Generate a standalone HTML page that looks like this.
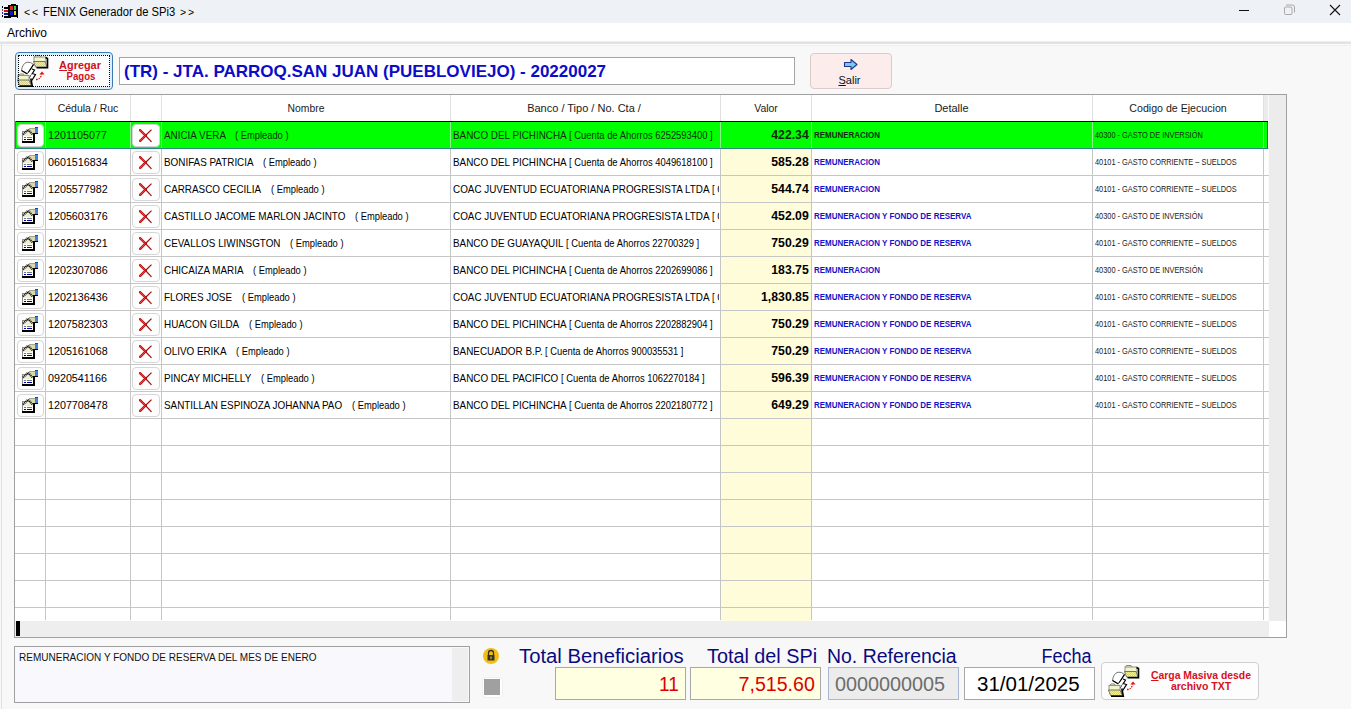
<!DOCTYPE html>
<html><head><meta charset="utf-8">
<style>
*{margin:0;padding:0;box-sizing:border-box}
html,body{width:1351px;height:709px;overflow:hidden;background:#f7f7f7;font-family:"Liberation Sans",sans-serif;position:relative}
.r{position:absolute}
.t{position:absolute;white-space:nowrap}
</style></head><body>
<div class="r" style="left:0px;top:0px;width:1351px;height:23px;background:#eef2f7"></div>
<div class="r" style="left:0px;top:23px;width:1351px;height:18px;background:#ffffff"></div>
<div class="r" style="left:0px;top:41px;width:1351px;height:1px;background:#efefef"></div>
<div class="r" style="left:0px;top:42px;width:1351px;height:2px;background:#e2e2e2"></div>
<div class="r" style="left:0px;top:44px;width:1351px;height:1px;background:#fbfbfb"></div>
<div class="r" style="left:0px;top:45px;width:1351px;height:1px;background:#efefef"></div>
<div class="r" style="left:0px;top:46px;width:1351px;height:663px;background:#f8f8f8"></div>
<div class="r" style="left:1px;top:44px;width:1px;height:665px;background:#e0e0e0"></div>
<svg class="r" style="left:0px;top:0px" width="20" height="20" viewBox="0 0 20 20" shape-rendering="crispEdges">
<rect x="2" y="6" width="1" height="2" fill="#000"/><rect x="2" y="9" width="1" height="2" fill="#8a4040"/><rect x="2" y="12" width="1" height="2" fill="#2030a0"/><rect x="2" y="15" width="1" height="2" fill="#000"/>
<rect x="4" y="7" width="5" height="2" fill="#000"/><rect x="4" y="10" width="5" height="2" fill="#d01010"/><rect x="4" y="13" width="5" height="2" fill="#1010a0"/><rect x="4" y="16" width="5" height="2" fill="#000"/>
<path d="M8 5H11V4H16V5H18V18H17V17H11V18H8Z" fill="#000"/>
<rect x="10" y="6" width="3" height="4" fill="#e02828"/><rect x="14" y="6" width="2" height="4" fill="#30d838"/>
<rect x="10" y="11" width="3" height="4" fill="#1018c8"/><rect x="14" y="11" width="2" height="4" fill="#f0e020"/>
</svg>
<div class="t" style="left:23.5px;top:5.50px;font-size:11px;line-height:13px;color:#000;font-weight:400;transform:scaleX(0.95);transform-origin:left center;">&lt;</div>
<div class="t" style="left:31.8px;top:5.50px;font-size:11px;line-height:13px;color:#000;font-weight:400;transform:scaleX(0.95);transform-origin:left center;">&lt;</div>
<div class="t" style="left:43px;top:5.00px;font-size:12px;line-height:14px;color:#000;font-weight:400;transform:scaleX(0.935);transform-origin:left center;">FENIX Generador de SPi3</div>
<div class="t" style="left:179.5px;top:5.50px;font-size:11px;line-height:13px;color:#000;font-weight:400;transform:scaleX(0.95);transform-origin:left center;">&gt;</div>
<div class="t" style="left:187.5px;top:5.50px;font-size:11px;line-height:13px;color:#000;font-weight:400;transform:scaleX(0.95);transform-origin:left center;">&gt;</div>
<div class="r" style="left:1239px;top:10px;width:10px;height:1px;background:#111"></div>
<svg class="r" style="left:1283px;top:4px" width="13" height="13" viewBox="0 0 13 13"><rect x="1.5" y="3" width="7.5" height="7.5" rx="1" fill="none" stroke="#a8a8a8" stroke-width="1"/><path d="M3 1H9.5Q11.5 1 11.5 3V8.5" fill="none" stroke="#a8a8a8" stroke-width="1"/></svg>
<svg class="r" style="left:1329px;top:4px" width="12" height="12" viewBox="0 0 12 12"><path d="M1 1L11 11M11 1L1 11" stroke="#111" stroke-width="1.1"/></svg>
<div class="t" style="left:7px;top:25.50px;font-size:12px;line-height:14px;color:#000;font-weight:400;">Archivo</div>
<div class="r" style="left:15px;top:52px;width:98px;height:38px;border:1px solid #3d7ab5;border-radius:4px;background:#fdfcfc;box-shadow:inset 0 0 0 2px #d8f0fb"></div>
<svg class="r" style="left:14px;top:52px" width="38" height="38" viewBox="0 0 38 38">
<defs><pattern id="dz1" width="2" height="2" patternUnits="userSpaceOnUse"><rect width="2" height="2" fill="#f4f488"/><rect width="1" height="1" fill="#d0d08a"/><rect x="1" y="1" width="1" height="1" fill="#d0d08a"/></pattern></defs>
<path d="M20.5 5L21.5 3.5H26L27 5" fill="#f4f4d0" stroke="#777" stroke-width="0.9"/>
<rect x="20" y="5" width="12" height="5" fill="#f4f4cc" stroke="#888" stroke-width="0.9"/>
<path d="M19.5 9.5H31L33 15H21.5Z" fill="url(#dz1)" stroke="#666" stroke-width="0.9"/>
<path d="M31.5 5.5L33.5 6.5V15.8H22.5" fill="none" stroke="#000" stroke-width="1.6"/>
<path d="M7.5 18.5C8 14 10 11 13 10.2L16.5 10.5L19.5 12.5L14 21L13.5 22Z" fill="#fff" stroke="#666" stroke-width="0.9"/>
<path d="M19.5 12.5L14 21M7.5 18.5L13.5 22" fill="none" stroke="#000" stroke-width="1.3"/>
<path d="M13.5 22L18 17L20.5 18L15.5 26Z" fill="#fff"/>
<path d="M18 17L20.5 18L15.5 26M9 24L15.5 26.5" fill="none" stroke="#000" stroke-width="1.2"/>
<path d="M15.5 26.5L18 21.5L21.5 22.5L16.5 30Z" fill="#fff"/>
<path d="M18 21.5L21.5 22.5L16.5 30.5" fill="none" stroke="#000" stroke-width="1.2"/>
<path d="M4.5 23.5L6 22H9.5L10.5 23.5" fill="#f4f4d0" stroke="#777" stroke-width="0.9"/>
<rect x="4" y="23.5" width="11" height="5" fill="#f4f4cc" stroke="#888" stroke-width="0.9"/>
<path d="M3.5 28H15L17.3 33.5H5.5Z" fill="url(#dz1)" stroke="#666" stroke-width="0.9"/>
<path d="M16.8 26.5L18.3 34.3H6" fill="none" stroke="#000" stroke-width="1.6"/>
<path d="M22 27.5Q26.5 27.5 27.6 22.5" fill="none" stroke="#e01818" stroke-width="1.3" stroke-dasharray="1.6 0.9"/>
<path d="M28 19.5L30.6 22.6H25.4Z" fill="#e01818"/>
</svg>
<div class="r" style="left:18px;top:55px;width:92px;height:32px;border:1px dotted #000"></div>
<div class="t" style="left:80px;top:59.50px;font-size:10px;line-height:12px;color:#d0101c;font-weight:700;transform:translateX(-50%) scaleX(1.09);"><u>A</u>gregar</div>
<div class="t" style="left:80.5px;top:71.00px;font-size:10px;line-height:12px;color:#d0101c;font-weight:700;transform:translateX(-50%) scaleX(0.96);">Pagos</div>
<div class="r" style="left:119px;top:57px;width:676px;height:28px;border:1px solid #a4a4a4;background:#fff"></div>
<div class="t" style="left:124px;top:61.50px;font-size:17px;line-height:20px;color:#0c0cc8;font-weight:700;">(TR) - JTA. PARROQ.SAN JUAN (PUEBLOVIEJO) - 20220027</div>
<div class="r" style="left:810px;top:53px;width:82px;height:36px;border:1px solid #dccbcb;border-radius:4px;background:#fcecec"></div>
<svg class="r" style="left:843px;top:58px" width="16" height="13" viewBox="0 0 16 13"><path d="M1.5 4.5h6.5v-3l6 5l-6 5v-3h-6.5z" fill="#7fc4f4" stroke="#1a3a8a" stroke-width="1.1" stroke-linejoin="round"/></svg>
<div class="t" style="left:849.5px;top:73.50px;font-size:11px;line-height:13px;color:#111;font-weight:400;transform:translateX(-50%);"><u>S</u>alir</div>
<div class="r" style="left:14px;top:94px;width:1273px;height:544px;border:1px solid #a0a0a0;background:#fff"></div>
<div class="r" style="left:721px;top:122px;width:90px;height:499px;background:#fffcda"></div>
<div class="r" style="left:1269px;top:95px;width:17px;height:526px;background:#ececec"></div>
<div class="r" style="left:1264px;top:95px;width:4px;height:26px;background:#ebebeb"></div>
<div class="r" style="left:1268px;top:95px;width:1px;height:526px;background:#fbfbfb"></div>
<div class="r" style="left:15px;top:621px;width:1254px;height:16px;background:#eeeeee"></div>
<div class="r" style="left:1269px;top:621px;width:17px;height:16px;background:#fff"></div>
<div class="r" style="left:16px;top:621px;width:4px;height:15px;background:#000"></div>
<div class="r" style="left:45px;top:95px;width:1px;height:26px;background:#e0e0e0"></div>
<div class="r" style="left:130px;top:95px;width:1px;height:26px;background:#e0e0e0"></div>
<div class="r" style="left:161px;top:95px;width:1px;height:26px;background:#e0e0e0"></div>
<div class="r" style="left:450px;top:95px;width:1px;height:26px;background:#e0e0e0"></div>
<div class="r" style="left:720px;top:95px;width:1px;height:26px;background:#e0e0e0"></div>
<div class="r" style="left:811px;top:95px;width:1px;height:26px;background:#e0e0e0"></div>
<div class="r" style="left:1092px;top:95px;width:1px;height:26px;background:#e0e0e0"></div>
<div class="r" style="left:1263px;top:95px;width:1px;height:26px;background:#e0e0e0"></div>
<div class="r" style="left:15px;top:148px;width:1254px;height:1px;background:#c6c6c6"></div>
<div class="r" style="left:15px;top:175px;width:1254px;height:1px;background:#c6c6c6"></div>
<div class="r" style="left:15px;top:202px;width:1254px;height:1px;background:#c6c6c6"></div>
<div class="r" style="left:15px;top:229px;width:1254px;height:1px;background:#c6c6c6"></div>
<div class="r" style="left:15px;top:256px;width:1254px;height:1px;background:#c6c6c6"></div>
<div class="r" style="left:15px;top:283px;width:1254px;height:1px;background:#c6c6c6"></div>
<div class="r" style="left:15px;top:310px;width:1254px;height:1px;background:#c6c6c6"></div>
<div class="r" style="left:15px;top:337px;width:1254px;height:1px;background:#c6c6c6"></div>
<div class="r" style="left:15px;top:364px;width:1254px;height:1px;background:#c6c6c6"></div>
<div class="r" style="left:15px;top:391px;width:1254px;height:1px;background:#c6c6c6"></div>
<div class="r" style="left:15px;top:418px;width:1254px;height:1px;background:#c6c6c6"></div>
<div class="r" style="left:15px;top:445px;width:1254px;height:1px;background:#c6c6c6"></div>
<div class="r" style="left:15px;top:472px;width:1254px;height:1px;background:#c6c6c6"></div>
<div class="r" style="left:15px;top:499px;width:1254px;height:1px;background:#c6c6c6"></div>
<div class="r" style="left:15px;top:526px;width:1254px;height:1px;background:#c6c6c6"></div>
<div class="r" style="left:15px;top:553px;width:1254px;height:1px;background:#c6c6c6"></div>
<div class="r" style="left:15px;top:580px;width:1254px;height:1px;background:#c6c6c6"></div>
<div class="r" style="left:15px;top:607px;width:1254px;height:1px;background:#c6c6c6"></div>
<div class="r" style="left:45px;top:122px;width:1px;height:498px;background:#c6c6c6"></div>
<div class="r" style="left:130px;top:122px;width:1px;height:498px;background:#c6c6c6"></div>
<div class="r" style="left:161px;top:122px;width:1px;height:498px;background:#c6c6c6"></div>
<div class="r" style="left:450px;top:122px;width:1px;height:498px;background:#c6c6c6"></div>
<div class="r" style="left:720px;top:122px;width:1px;height:498px;background:#c6c6c6"></div>
<div class="r" style="left:811px;top:122px;width:1px;height:498px;background:#c6c6c6"></div>
<div class="r" style="left:1092px;top:122px;width:1px;height:498px;background:#c6c6c6"></div>
<div class="r" style="left:1263px;top:122px;width:1px;height:498px;background:#c6c6c6"></div>
<div class="r" style="left:15px;top:121px;width:1253px;height:28px;background:#00ff00"></div>
<div class="r" style="left:1267px;top:122px;width:1px;height:26px;background:#107030"></div>
<div class="r" style="left:15px;top:121px;width:1253px;height:1px;background:#000"></div>
<div class="r" style="left:15px;top:148px;width:1253px;height:1px;background:#2a8a7a"></div>
<div class="r" style="left:15px;top:121px;width:1px;height:28px;background:#3a70b0"></div>
<div class="r" style="left:45px;top:122px;width:1px;height:26px;background:#8cf08c"></div>
<div class="r" style="left:130px;top:122px;width:1px;height:26px;background:#8cf08c"></div>
<div class="r" style="left:161px;top:122px;width:1px;height:26px;background:#8cf08c"></div>
<div class="r" style="left:450px;top:122px;width:1px;height:26px;background:#8cf08c"></div>
<div class="r" style="left:720px;top:122px;width:1px;height:26px;background:#8cf08c"></div>
<div class="r" style="left:811px;top:122px;width:1px;height:26px;background:#8cf08c"></div>
<div class="r" style="left:1092px;top:122px;width:1px;height:26px;background:#8cf08c"></div>
<div class="r" style="left:1263px;top:122px;width:1px;height:26px;background:#8cf08c"></div>
<div class="t" style="left:88px;top:101.50px;font-size:11px;line-height:13px;color:#1a1a1a;font-weight:400;transform:translateX(-50%) scaleX(0.955);">Cédula / Ruc</div>
<div class="t" style="left:306px;top:101.50px;font-size:11px;line-height:13px;color:#1a1a1a;font-weight:400;transform:translateX(-50%) scaleX(0.94);">Nombre</div>
<div class="t" style="left:584px;top:101.50px;font-size:11px;line-height:13px;color:#1a1a1a;font-weight:400;transform:translateX(-50%);">Banco / Tipo / No. Cta /</div>
<div class="t" style="left:765.5px;top:101.50px;font-size:11px;line-height:13px;color:#1a1a1a;font-weight:400;transform:translateX(-50%) scaleX(0.95);">Valor</div>
<div class="t" style="left:951.5px;top:101.50px;font-size:11px;line-height:13px;color:#1a1a1a;font-weight:400;transform:translateX(-50%);">Detalle</div>
<div class="t" style="left:1177.5px;top:101.50px;font-size:11px;line-height:13px;color:#1a1a1a;font-weight:400;transform:translateX(-50%) scaleX(0.965);">Codigo de Ejecucion</div>
<div class="r" style="left:17px;top:124px;width:27px;height:23px;border:1px solid #d6d6d6;border-radius:4px;background:#fdfdfd"></div>
<svg class="r" style="left:21px;top:127px" width="18" height="16" viewBox="0 0 18 16" shape-rendering="crispEdges">
<rect x="1" y="4" width="11" height="10" fill="#fdfdf8"/>
<rect x="2" y="5" width="10" height="4" fill="#f0eed0"/>
<rect x="1" y="4" width="11" height="1" fill="#8c8c8c"/><rect x="1" y="4" width="1" height="11" fill="#8c8c8c"/>
<rect x="12" y="6" width="2" height="10" fill="#000"/><rect x="1" y="14" width="13" height="2" fill="#000"/>
<rect x="3" y="10" width="2" height="1" fill="#7070b0"/><rect x="6" y="10" width="5" height="1" fill="#6a7a90"/>
<rect x="3" y="12" width="2" height="1" fill="#0000a0"/><rect x="6" y="12" width="5" height="1" fill="#0000a0"/>
<rect x="8" y="1" width="6" height="5" fill="#dcd8a8"/><rect x="8" y="1" width="6" height="1" fill="#a8a488"/>
<rect x="12" y="6" width="5" height="1" fill="#000"/>
<rect x="14" y="1" width="3" height="5" fill="#3a84dc"/><rect x="14" y="0" width="3" height="1" fill="#1a4a90"/>
<path d="M2 7.5L7 2.5L11.5 7.5" fill="none" stroke="#111" stroke-width="2" stroke-dasharray="1.1 0.7" shape-rendering="auto"/>
</svg>
<div class="r" style="left:132px;top:124px;width:28px;height:23px;border:1px solid #d6d6d6;border-radius:4px;background:#fdfdfd"></div>
<svg class="r" style="left:139px;top:129px" width="14" height="14" viewBox="0 0 14 14">
<path d="M1 1.2L6.5 6.5" stroke="#c01010" stroke-width="2.4" stroke-linecap="round"/>
<path d="M1 1.2L6.5 6.5" stroke="#f05050" stroke-width="0.8" stroke-linecap="round"/>
<path d="M6.5 6.5L12.5 12.8" stroke="#a01010" stroke-width="1.2"/>
<path d="M1.2 11.8L6.5 6.5" stroke="#c01010" stroke-width="2.4" stroke-linecap="round"/>
<path d="M1.2 11.8L6.5 6.5" stroke="#f05050" stroke-width="0.8" stroke-linecap="round"/>
<path d="M6.5 6.5L12.5 0.6" stroke="#a01010" stroke-width="1.2"/>
</svg>
<div class="t" style="left:48px;top:129.00px;font-size:11px;line-height:13px;color:#0e2e0e;font-weight:400;transform:scaleX(0.975);transform-origin:left center;">1201105077</div>
<div class="t" style="left:163.5px;top:129.00px;font-size:10.5px;line-height:13px;color:#0e2e0e;font-weight:400;transform:scaleX(0.94);transform-origin:left center;">ANICIA VERA</div>
<div class="t" style="left:235.4959375px;top:129.00px;font-size:10.5px;line-height:13px;color:#0e2e0e;font-weight:400;transform:scaleX(0.89);transform-origin:left center;">( Empleado )</div>
<!--EMP 0 139.5-->
<div class="t" style="left:452.5px;top:129.00px;font-size:10.5px;line-height:13px;color:#0e2e0e;font-weight:400;transform:scaleX(0.94);transform-origin:left center;">BANCO DEL PICHINCHA</div>
<div class="r" style="left:569.2106249999999px;top:122px;width:149.78937500000006px;height:26px;overflow:hidden">
<div class="t" style="left:0px;top:7.00px;font-size:10.5px;line-height:13px;color:#0e2e0e;font-weight:400;transform:scaleX(0.895);transform-origin:left center;">[ Cuenta de Ahorros 6252593400 ]</div>
</div>
<div class="t" style="right:542.5px;top:128.00px;font-size:12px;line-height:14px;color:#0e2e0e;font-weight:700;transform:scaleX(1.02);transform-origin:right center;">422.34</div>
<div class="t" style="left:814px;top:129.50px;font-size:9px;line-height:11px;color:#0e2e0e;font-weight:700;transform:scaleX(0.885);transform-origin:left center;">REMUNERACION</div>
<div class="t" style="left:1095px;top:129.50px;font-size:9px;line-height:11px;color:#0e2e0e;font-weight:400;transform:scaleX(0.82);transform-origin:left center;">40300 - GASTO DE INVERSIÓN</div>
<div class="r" style="left:17px;top:151px;width:27px;height:23px;border:1px solid #d6d6d6;border-radius:4px;background:#fdfdfd"></div>
<svg class="r" style="left:21px;top:154px" width="18" height="16" viewBox="0 0 18 16" shape-rendering="crispEdges">
<rect x="1" y="4" width="11" height="10" fill="#fdfdf8"/>
<rect x="2" y="5" width="10" height="4" fill="#f0eed0"/>
<rect x="1" y="4" width="11" height="1" fill="#8c8c8c"/><rect x="1" y="4" width="1" height="11" fill="#8c8c8c"/>
<rect x="12" y="6" width="2" height="10" fill="#000"/><rect x="1" y="14" width="13" height="2" fill="#000"/>
<rect x="3" y="10" width="2" height="1" fill="#7070b0"/><rect x="6" y="10" width="5" height="1" fill="#6a7a90"/>
<rect x="3" y="12" width="2" height="1" fill="#0000a0"/><rect x="6" y="12" width="5" height="1" fill="#0000a0"/>
<rect x="8" y="1" width="6" height="5" fill="#dcd8a8"/><rect x="8" y="1" width="6" height="1" fill="#a8a488"/>
<rect x="12" y="6" width="5" height="1" fill="#000"/>
<rect x="14" y="1" width="3" height="5" fill="#3a84dc"/><rect x="14" y="0" width="3" height="1" fill="#1a4a90"/>
<path d="M2 7.5L7 2.5L11.5 7.5" fill="none" stroke="#111" stroke-width="2" stroke-dasharray="1.1 0.7" shape-rendering="auto"/>
</svg>
<div class="r" style="left:132px;top:151px;width:28px;height:23px;border:1px solid #d6d6d6;border-radius:4px;background:#fdfdfd"></div>
<svg class="r" style="left:139px;top:156px" width="14" height="14" viewBox="0 0 14 14">
<path d="M1 1.2L6.5 6.5" stroke="#c01010" stroke-width="2.4" stroke-linecap="round"/>
<path d="M1 1.2L6.5 6.5" stroke="#f05050" stroke-width="0.8" stroke-linecap="round"/>
<path d="M6.5 6.5L12.5 12.8" stroke="#a01010" stroke-width="1.2"/>
<path d="M1.2 11.8L6.5 6.5" stroke="#c01010" stroke-width="2.4" stroke-linecap="round"/>
<path d="M1.2 11.8L6.5 6.5" stroke="#f05050" stroke-width="0.8" stroke-linecap="round"/>
<path d="M6.5 6.5L12.5 0.6" stroke="#a01010" stroke-width="1.2"/>
</svg>
<div class="t" style="left:48px;top:156.00px;font-size:11px;line-height:13px;color:#000;font-weight:400;transform:scaleX(0.975);transform-origin:left center;">0601516834</div>
<div class="t" style="left:163.5px;top:156.00px;font-size:10.5px;line-height:13px;color:#000;font-weight:400;transform:scaleX(0.94);transform-origin:left center;">BONIFAS PATRICIA</div>
<div class="t" style="left:263.07906249999996px;top:156.00px;font-size:10.5px;line-height:13px;color:#000;font-weight:400;transform:scaleX(0.89);transform-origin:left center;">( Empleado )</div>
<!--EMP 1 166.5-->
<div class="t" style="left:452.5px;top:156.00px;font-size:10.5px;line-height:13px;color:#000;font-weight:400;transform:scaleX(0.94);transform-origin:left center;">BANCO DEL PICHINCHA</div>
<div class="r" style="left:569.2106249999999px;top:149px;width:149.78937500000006px;height:26px;overflow:hidden">
<div class="t" style="left:0px;top:7.00px;font-size:10.5px;line-height:13px;color:#000;font-weight:400;transform:scaleX(0.895);transform-origin:left center;">[ Cuenta de Ahorros 4049618100 ]</div>
</div>
<div class="t" style="right:542.5px;top:155.00px;font-size:12px;line-height:14px;color:#000;font-weight:700;transform:scaleX(1.02);transform-origin:right center;">585.28</div>
<div class="t" style="left:814px;top:156.50px;font-size:9px;line-height:11px;color:#1212c8;font-weight:700;transform:scaleX(0.885);transform-origin:left center;">REMUNERACION</div>
<div class="t" style="left:1095px;top:156.50px;font-size:9px;line-height:11px;color:#222;font-weight:400;transform:scaleX(0.82);transform-origin:left center;">40101 - GASTO CORRIENTE – SUELDOS</div>
<div class="r" style="left:17px;top:178px;width:27px;height:23px;border:1px solid #d6d6d6;border-radius:4px;background:#fdfdfd"></div>
<svg class="r" style="left:21px;top:181px" width="18" height="16" viewBox="0 0 18 16" shape-rendering="crispEdges">
<rect x="1" y="4" width="11" height="10" fill="#fdfdf8"/>
<rect x="2" y="5" width="10" height="4" fill="#f0eed0"/>
<rect x="1" y="4" width="11" height="1" fill="#8c8c8c"/><rect x="1" y="4" width="1" height="11" fill="#8c8c8c"/>
<rect x="12" y="6" width="2" height="10" fill="#000"/><rect x="1" y="14" width="13" height="2" fill="#000"/>
<rect x="3" y="10" width="2" height="1" fill="#7070b0"/><rect x="6" y="10" width="5" height="1" fill="#6a7a90"/>
<rect x="3" y="12" width="2" height="1" fill="#0000a0"/><rect x="6" y="12" width="5" height="1" fill="#0000a0"/>
<rect x="8" y="1" width="6" height="5" fill="#dcd8a8"/><rect x="8" y="1" width="6" height="1" fill="#a8a488"/>
<rect x="12" y="6" width="5" height="1" fill="#000"/>
<rect x="14" y="1" width="3" height="5" fill="#3a84dc"/><rect x="14" y="0" width="3" height="1" fill="#1a4a90"/>
<path d="M2 7.5L7 2.5L11.5 7.5" fill="none" stroke="#111" stroke-width="2" stroke-dasharray="1.1 0.7" shape-rendering="auto"/>
</svg>
<div class="r" style="left:132px;top:178px;width:28px;height:23px;border:1px solid #d6d6d6;border-radius:4px;background:#fdfdfd"></div>
<svg class="r" style="left:139px;top:183px" width="14" height="14" viewBox="0 0 14 14">
<path d="M1 1.2L6.5 6.5" stroke="#c01010" stroke-width="2.4" stroke-linecap="round"/>
<path d="M1 1.2L6.5 6.5" stroke="#f05050" stroke-width="0.8" stroke-linecap="round"/>
<path d="M6.5 6.5L12.5 12.8" stroke="#a01010" stroke-width="1.2"/>
<path d="M1.2 11.8L6.5 6.5" stroke="#c01010" stroke-width="2.4" stroke-linecap="round"/>
<path d="M1.2 11.8L6.5 6.5" stroke="#f05050" stroke-width="0.8" stroke-linecap="round"/>
<path d="M6.5 6.5L12.5 0.6" stroke="#a01010" stroke-width="1.2"/>
</svg>
<div class="t" style="left:48px;top:183.00px;font-size:11px;line-height:13px;color:#000;font-weight:400;transform:scaleX(0.975);transform-origin:left center;">1205577982</div>
<div class="t" style="left:163.5px;top:183.00px;font-size:10.5px;line-height:13px;color:#000;font-weight:400;transform:scaleX(0.94);transform-origin:left center;">CARRASCO CECILIA</div>
<div class="t" style="left:270.584375px;top:183.00px;font-size:10.5px;line-height:13px;color:#000;font-weight:400;transform:scaleX(0.89);transform-origin:left center;">( Empleado )</div>
<!--EMP 2 193.5-->
<div class="t" style="left:452.5px;top:183.00px;font-size:10.5px;line-height:13px;color:#000;font-weight:400;transform:scaleX(0.94);transform-origin:left center;">COAC JUVENTUD ECUATORIANA PROGRESISTA LTDA</div>
<div class="r" style="left:711.9878125px;top:176px;width:7.012187499999982px;height:26px;overflow:hidden">
<div class="t" style="left:0px;top:7.00px;font-size:10.5px;line-height:13px;color:#000;font-weight:400;transform:scaleX(0.895);transform-origin:left center;">[ Cuenta</div>
</div>
<div class="t" style="right:542.5px;top:182.00px;font-size:12px;line-height:14px;color:#000;font-weight:700;transform:scaleX(1.02);transform-origin:right center;">544.74</div>
<div class="t" style="left:814px;top:183.50px;font-size:9px;line-height:11px;color:#1212c8;font-weight:700;transform:scaleX(0.885);transform-origin:left center;">REMUNERACION</div>
<div class="t" style="left:1095px;top:183.50px;font-size:9px;line-height:11px;color:#222;font-weight:400;transform:scaleX(0.82);transform-origin:left center;">40101 - GASTO CORRIENTE – SUELDOS</div>
<div class="r" style="left:17px;top:205px;width:27px;height:23px;border:1px solid #d6d6d6;border-radius:4px;background:#fdfdfd"></div>
<svg class="r" style="left:21px;top:208px" width="18" height="16" viewBox="0 0 18 16" shape-rendering="crispEdges">
<rect x="1" y="4" width="11" height="10" fill="#fdfdf8"/>
<rect x="2" y="5" width="10" height="4" fill="#f0eed0"/>
<rect x="1" y="4" width="11" height="1" fill="#8c8c8c"/><rect x="1" y="4" width="1" height="11" fill="#8c8c8c"/>
<rect x="12" y="6" width="2" height="10" fill="#000"/><rect x="1" y="14" width="13" height="2" fill="#000"/>
<rect x="3" y="10" width="2" height="1" fill="#7070b0"/><rect x="6" y="10" width="5" height="1" fill="#6a7a90"/>
<rect x="3" y="12" width="2" height="1" fill="#0000a0"/><rect x="6" y="12" width="5" height="1" fill="#0000a0"/>
<rect x="8" y="1" width="6" height="5" fill="#dcd8a8"/><rect x="8" y="1" width="6" height="1" fill="#a8a488"/>
<rect x="12" y="6" width="5" height="1" fill="#000"/>
<rect x="14" y="1" width="3" height="5" fill="#3a84dc"/><rect x="14" y="0" width="3" height="1" fill="#1a4a90"/>
<path d="M2 7.5L7 2.5L11.5 7.5" fill="none" stroke="#111" stroke-width="2" stroke-dasharray="1.1 0.7" shape-rendering="auto"/>
</svg>
<div class="r" style="left:132px;top:205px;width:28px;height:23px;border:1px solid #d6d6d6;border-radius:4px;background:#fdfdfd"></div>
<svg class="r" style="left:139px;top:210px" width="14" height="14" viewBox="0 0 14 14">
<path d="M1 1.2L6.5 6.5" stroke="#c01010" stroke-width="2.4" stroke-linecap="round"/>
<path d="M1 1.2L6.5 6.5" stroke="#f05050" stroke-width="0.8" stroke-linecap="round"/>
<path d="M6.5 6.5L12.5 12.8" stroke="#a01010" stroke-width="1.2"/>
<path d="M1.2 11.8L6.5 6.5" stroke="#c01010" stroke-width="2.4" stroke-linecap="round"/>
<path d="M1.2 11.8L6.5 6.5" stroke="#f05050" stroke-width="0.8" stroke-linecap="round"/>
<path d="M6.5 6.5L12.5 0.6" stroke="#a01010" stroke-width="1.2"/>
</svg>
<div class="t" style="left:48px;top:210.00px;font-size:11px;line-height:13px;color:#000;font-weight:400;transform:scaleX(0.975);transform-origin:left center;">1205603176</div>
<div class="t" style="left:163.5px;top:210.00px;font-size:10.5px;line-height:13px;color:#000;font-weight:400;transform:scaleX(0.94);transform-origin:left center;">CASTILLO JACOME MARLON JACINTO</div>
<div class="t" style="left:354.86125px;top:210.00px;font-size:10.5px;line-height:13px;color:#000;font-weight:400;transform:scaleX(0.89);transform-origin:left center;">( Empleado )</div>
<!--EMP 3 220.5-->
<div class="t" style="left:452.5px;top:210.00px;font-size:10.5px;line-height:13px;color:#000;font-weight:400;transform:scaleX(0.94);transform-origin:left center;">COAC JUVENTUD ECUATORIANA PROGRESISTA LTDA</div>
<div class="r" style="left:711.9878125px;top:203px;width:7.012187499999982px;height:26px;overflow:hidden">
<div class="t" style="left:0px;top:7.00px;font-size:10.5px;line-height:13px;color:#000;font-weight:400;transform:scaleX(0.895);transform-origin:left center;">[ Cuenta</div>
</div>
<div class="t" style="right:542.5px;top:209.00px;font-size:12px;line-height:14px;color:#000;font-weight:700;transform:scaleX(1.02);transform-origin:right center;">452.09</div>
<div class="t" style="left:814px;top:210.50px;font-size:9px;line-height:11px;color:#1212c8;font-weight:700;transform:scaleX(0.885);transform-origin:left center;">REMUNERACION Y FONDO DE RESERVA</div>
<div class="t" style="left:1095px;top:210.50px;font-size:9px;line-height:11px;color:#222;font-weight:400;transform:scaleX(0.82);transform-origin:left center;">40300 - GASTO DE INVERSIÓN</div>
<div class="r" style="left:17px;top:232px;width:27px;height:23px;border:1px solid #d6d6d6;border-radius:4px;background:#fdfdfd"></div>
<svg class="r" style="left:21px;top:235px" width="18" height="16" viewBox="0 0 18 16" shape-rendering="crispEdges">
<rect x="1" y="4" width="11" height="10" fill="#fdfdf8"/>
<rect x="2" y="5" width="10" height="4" fill="#f0eed0"/>
<rect x="1" y="4" width="11" height="1" fill="#8c8c8c"/><rect x="1" y="4" width="1" height="11" fill="#8c8c8c"/>
<rect x="12" y="6" width="2" height="10" fill="#000"/><rect x="1" y="14" width="13" height="2" fill="#000"/>
<rect x="3" y="10" width="2" height="1" fill="#7070b0"/><rect x="6" y="10" width="5" height="1" fill="#6a7a90"/>
<rect x="3" y="12" width="2" height="1" fill="#0000a0"/><rect x="6" y="12" width="5" height="1" fill="#0000a0"/>
<rect x="8" y="1" width="6" height="5" fill="#dcd8a8"/><rect x="8" y="1" width="6" height="1" fill="#a8a488"/>
<rect x="12" y="6" width="5" height="1" fill="#000"/>
<rect x="14" y="1" width="3" height="5" fill="#3a84dc"/><rect x="14" y="0" width="3" height="1" fill="#1a4a90"/>
<path d="M2 7.5L7 2.5L11.5 7.5" fill="none" stroke="#111" stroke-width="2" stroke-dasharray="1.1 0.7" shape-rendering="auto"/>
</svg>
<div class="r" style="left:132px;top:232px;width:28px;height:23px;border:1px solid #d6d6d6;border-radius:4px;background:#fdfdfd"></div>
<svg class="r" style="left:139px;top:237px" width="14" height="14" viewBox="0 0 14 14">
<path d="M1 1.2L6.5 6.5" stroke="#c01010" stroke-width="2.4" stroke-linecap="round"/>
<path d="M1 1.2L6.5 6.5" stroke="#f05050" stroke-width="0.8" stroke-linecap="round"/>
<path d="M6.5 6.5L12.5 12.8" stroke="#a01010" stroke-width="1.2"/>
<path d="M1.2 11.8L6.5 6.5" stroke="#c01010" stroke-width="2.4" stroke-linecap="round"/>
<path d="M1.2 11.8L6.5 6.5" stroke="#f05050" stroke-width="0.8" stroke-linecap="round"/>
<path d="M6.5 6.5L12.5 0.6" stroke="#a01010" stroke-width="1.2"/>
</svg>
<div class="t" style="left:48px;top:237.00px;font-size:11px;line-height:13px;color:#000;font-weight:400;transform:scaleX(0.975);transform-origin:left center;">1202139521</div>
<div class="t" style="left:163.5px;top:237.00px;font-size:10.5px;line-height:13px;color:#000;font-weight:400;transform:scaleX(0.94);transform-origin:left center;">CEVALLOS LIWINSGTON</div>
<div class="t" style="left:289.971875px;top:237.00px;font-size:10.5px;line-height:13px;color:#000;font-weight:400;transform:scaleX(0.89);transform-origin:left center;">( Empleado )</div>
<!--EMP 4 247.5-->
<div class="t" style="left:452.5px;top:237.00px;font-size:10.5px;line-height:13px;color:#000;font-weight:400;transform:scaleX(0.94);transform-origin:left center;">BANCO DE GUAYAQUIL</div>
<div class="r" style="left:565.920625px;top:230px;width:153.07937500000003px;height:26px;overflow:hidden">
<div class="t" style="left:0px;top:7.00px;font-size:10.5px;line-height:13px;color:#000;font-weight:400;transform:scaleX(0.895);transform-origin:left center;">[ Cuenta de Ahorros 22700329 ]</div>
</div>
<div class="t" style="right:542.5px;top:236.00px;font-size:12px;line-height:14px;color:#000;font-weight:700;transform:scaleX(1.02);transform-origin:right center;">750.29</div>
<div class="t" style="left:814px;top:237.50px;font-size:9px;line-height:11px;color:#1212c8;font-weight:700;transform:scaleX(0.885);transform-origin:left center;">REMUNERACION Y FONDO DE RESERVA</div>
<div class="t" style="left:1095px;top:237.50px;font-size:9px;line-height:11px;color:#222;font-weight:400;transform:scaleX(0.82);transform-origin:left center;">40101 - GASTO CORRIENTE – SUELDOS</div>
<div class="r" style="left:17px;top:259px;width:27px;height:23px;border:1px solid #d6d6d6;border-radius:4px;background:#fdfdfd"></div>
<svg class="r" style="left:21px;top:262px" width="18" height="16" viewBox="0 0 18 16" shape-rendering="crispEdges">
<rect x="1" y="4" width="11" height="10" fill="#fdfdf8"/>
<rect x="2" y="5" width="10" height="4" fill="#f0eed0"/>
<rect x="1" y="4" width="11" height="1" fill="#8c8c8c"/><rect x="1" y="4" width="1" height="11" fill="#8c8c8c"/>
<rect x="12" y="6" width="2" height="10" fill="#000"/><rect x="1" y="14" width="13" height="2" fill="#000"/>
<rect x="3" y="10" width="2" height="1" fill="#7070b0"/><rect x="6" y="10" width="5" height="1" fill="#6a7a90"/>
<rect x="3" y="12" width="2" height="1" fill="#0000a0"/><rect x="6" y="12" width="5" height="1" fill="#0000a0"/>
<rect x="8" y="1" width="6" height="5" fill="#dcd8a8"/><rect x="8" y="1" width="6" height="1" fill="#a8a488"/>
<rect x="12" y="6" width="5" height="1" fill="#000"/>
<rect x="14" y="1" width="3" height="5" fill="#3a84dc"/><rect x="14" y="0" width="3" height="1" fill="#1a4a90"/>
<path d="M2 7.5L7 2.5L11.5 7.5" fill="none" stroke="#111" stroke-width="2" stroke-dasharray="1.1 0.7" shape-rendering="auto"/>
</svg>
<div class="r" style="left:132px;top:259px;width:28px;height:23px;border:1px solid #d6d6d6;border-radius:4px;background:#fdfdfd"></div>
<svg class="r" style="left:139px;top:264px" width="14" height="14" viewBox="0 0 14 14">
<path d="M1 1.2L6.5 6.5" stroke="#c01010" stroke-width="2.4" stroke-linecap="round"/>
<path d="M1 1.2L6.5 6.5" stroke="#f05050" stroke-width="0.8" stroke-linecap="round"/>
<path d="M6.5 6.5L12.5 12.8" stroke="#a01010" stroke-width="1.2"/>
<path d="M1.2 11.8L6.5 6.5" stroke="#c01010" stroke-width="2.4" stroke-linecap="round"/>
<path d="M1.2 11.8L6.5 6.5" stroke="#f05050" stroke-width="0.8" stroke-linecap="round"/>
<path d="M6.5 6.5L12.5 0.6" stroke="#a01010" stroke-width="1.2"/>
</svg>
<div class="t" style="left:48px;top:264.00px;font-size:11px;line-height:13px;color:#000;font-weight:400;transform:scaleX(0.975);transform-origin:left center;">1202307086</div>
<div class="t" style="left:163.5px;top:264.00px;font-size:10.5px;line-height:13px;color:#000;font-weight:400;transform:scaleX(0.94);transform-origin:left center;">CHICAIZA MARIA</div>
<div class="t" style="left:253.03281249999998px;top:264.00px;font-size:10.5px;line-height:13px;color:#000;font-weight:400;transform:scaleX(0.89);transform-origin:left center;">( Empleado )</div>
<!--EMP 5 274.5-->
<div class="t" style="left:452.5px;top:264.00px;font-size:10.5px;line-height:13px;color:#000;font-weight:400;transform:scaleX(0.94);transform-origin:left center;">BANCO DEL PICHINCHA</div>
<div class="r" style="left:569.2106249999999px;top:257px;width:149.78937500000006px;height:26px;overflow:hidden">
<div class="t" style="left:0px;top:7.00px;font-size:10.5px;line-height:13px;color:#000;font-weight:400;transform:scaleX(0.895);transform-origin:left center;">[ Cuenta de Ahorros 2202699086 ]</div>
</div>
<div class="t" style="right:542.5px;top:263.00px;font-size:12px;line-height:14px;color:#000;font-weight:700;transform:scaleX(1.02);transform-origin:right center;">183.75</div>
<div class="t" style="left:814px;top:264.50px;font-size:9px;line-height:11px;color:#1212c8;font-weight:700;transform:scaleX(0.885);transform-origin:left center;">REMUNERACION</div>
<div class="t" style="left:1095px;top:264.50px;font-size:9px;line-height:11px;color:#222;font-weight:400;transform:scaleX(0.82);transform-origin:left center;">40300 - GASTO DE INVERSIÓN</div>
<div class="r" style="left:17px;top:286px;width:27px;height:23px;border:1px solid #d6d6d6;border-radius:4px;background:#fdfdfd"></div>
<svg class="r" style="left:21px;top:289px" width="18" height="16" viewBox="0 0 18 16" shape-rendering="crispEdges">
<rect x="1" y="4" width="11" height="10" fill="#fdfdf8"/>
<rect x="2" y="5" width="10" height="4" fill="#f0eed0"/>
<rect x="1" y="4" width="11" height="1" fill="#8c8c8c"/><rect x="1" y="4" width="1" height="11" fill="#8c8c8c"/>
<rect x="12" y="6" width="2" height="10" fill="#000"/><rect x="1" y="14" width="13" height="2" fill="#000"/>
<rect x="3" y="10" width="2" height="1" fill="#7070b0"/><rect x="6" y="10" width="5" height="1" fill="#6a7a90"/>
<rect x="3" y="12" width="2" height="1" fill="#0000a0"/><rect x="6" y="12" width="5" height="1" fill="#0000a0"/>
<rect x="8" y="1" width="6" height="5" fill="#dcd8a8"/><rect x="8" y="1" width="6" height="1" fill="#a8a488"/>
<rect x="12" y="6" width="5" height="1" fill="#000"/>
<rect x="14" y="1" width="3" height="5" fill="#3a84dc"/><rect x="14" y="0" width="3" height="1" fill="#1a4a90"/>
<path d="M2 7.5L7 2.5L11.5 7.5" fill="none" stroke="#111" stroke-width="2" stroke-dasharray="1.1 0.7" shape-rendering="auto"/>
</svg>
<div class="r" style="left:132px;top:286px;width:28px;height:23px;border:1px solid #d6d6d6;border-radius:4px;background:#fdfdfd"></div>
<svg class="r" style="left:139px;top:291px" width="14" height="14" viewBox="0 0 14 14">
<path d="M1 1.2L6.5 6.5" stroke="#c01010" stroke-width="2.4" stroke-linecap="round"/>
<path d="M1 1.2L6.5 6.5" stroke="#f05050" stroke-width="0.8" stroke-linecap="round"/>
<path d="M6.5 6.5L12.5 12.8" stroke="#a01010" stroke-width="1.2"/>
<path d="M1.2 11.8L6.5 6.5" stroke="#c01010" stroke-width="2.4" stroke-linecap="round"/>
<path d="M1.2 11.8L6.5 6.5" stroke="#f05050" stroke-width="0.8" stroke-linecap="round"/>
<path d="M6.5 6.5L12.5 0.6" stroke="#a01010" stroke-width="1.2"/>
</svg>
<div class="t" style="left:48px;top:291.00px;font-size:11px;line-height:13px;color:#000;font-weight:400;transform:scaleX(0.975);transform-origin:left center;">1202136436</div>
<div class="t" style="left:163.5px;top:291.00px;font-size:10.5px;line-height:13px;color:#000;font-weight:400;transform:scaleX(0.94);transform-origin:left center;">FLORES JOSE</div>
<div class="t" style="left:241.5178125px;top:291.00px;font-size:10.5px;line-height:13px;color:#000;font-weight:400;transform:scaleX(0.89);transform-origin:left center;">( Empleado )</div>
<!--EMP 6 301.5-->
<div class="t" style="left:452.5px;top:291.00px;font-size:10.5px;line-height:13px;color:#000;font-weight:400;transform:scaleX(0.94);transform-origin:left center;">COAC JUVENTUD ECUATORIANA PROGRESISTA LTDA</div>
<div class="r" style="left:711.9878125px;top:284px;width:7.012187499999982px;height:26px;overflow:hidden">
<div class="t" style="left:0px;top:7.00px;font-size:10.5px;line-height:13px;color:#000;font-weight:400;transform:scaleX(0.895);transform-origin:left center;">[ Cuenta</div>
</div>
<div class="t" style="right:542.5px;top:290.00px;font-size:12px;line-height:14px;color:#000;font-weight:700;transform:scaleX(1.02);transform-origin:right center;">1,830.85</div>
<div class="t" style="left:814px;top:291.50px;font-size:9px;line-height:11px;color:#1212c8;font-weight:700;transform:scaleX(0.885);transform-origin:left center;">REMUNERACION Y FONDO DE RESERVA</div>
<div class="t" style="left:1095px;top:291.50px;font-size:9px;line-height:11px;color:#222;font-weight:400;transform:scaleX(0.82);transform-origin:left center;">40101 - GASTO CORRIENTE – SUELDOS</div>
<div class="r" style="left:17px;top:313px;width:27px;height:23px;border:1px solid #d6d6d6;border-radius:4px;background:#fdfdfd"></div>
<svg class="r" style="left:21px;top:316px" width="18" height="16" viewBox="0 0 18 16" shape-rendering="crispEdges">
<rect x="1" y="4" width="11" height="10" fill="#fdfdf8"/>
<rect x="2" y="5" width="10" height="4" fill="#f0eed0"/>
<rect x="1" y="4" width="11" height="1" fill="#8c8c8c"/><rect x="1" y="4" width="1" height="11" fill="#8c8c8c"/>
<rect x="12" y="6" width="2" height="10" fill="#000"/><rect x="1" y="14" width="13" height="2" fill="#000"/>
<rect x="3" y="10" width="2" height="1" fill="#7070b0"/><rect x="6" y="10" width="5" height="1" fill="#6a7a90"/>
<rect x="3" y="12" width="2" height="1" fill="#0000a0"/><rect x="6" y="12" width="5" height="1" fill="#0000a0"/>
<rect x="8" y="1" width="6" height="5" fill="#dcd8a8"/><rect x="8" y="1" width="6" height="1" fill="#a8a488"/>
<rect x="12" y="6" width="5" height="1" fill="#000"/>
<rect x="14" y="1" width="3" height="5" fill="#3a84dc"/><rect x="14" y="0" width="3" height="1" fill="#1a4a90"/>
<path d="M2 7.5L7 2.5L11.5 7.5" fill="none" stroke="#111" stroke-width="2" stroke-dasharray="1.1 0.7" shape-rendering="auto"/>
</svg>
<div class="r" style="left:132px;top:313px;width:28px;height:23px;border:1px solid #d6d6d6;border-radius:4px;background:#fdfdfd"></div>
<svg class="r" style="left:139px;top:318px" width="14" height="14" viewBox="0 0 14 14">
<path d="M1 1.2L6.5 6.5" stroke="#c01010" stroke-width="2.4" stroke-linecap="round"/>
<path d="M1 1.2L6.5 6.5" stroke="#f05050" stroke-width="0.8" stroke-linecap="round"/>
<path d="M6.5 6.5L12.5 12.8" stroke="#a01010" stroke-width="1.2"/>
<path d="M1.2 11.8L6.5 6.5" stroke="#c01010" stroke-width="2.4" stroke-linecap="round"/>
<path d="M1.2 11.8L6.5 6.5" stroke="#f05050" stroke-width="0.8" stroke-linecap="round"/>
<path d="M6.5 6.5L12.5 0.6" stroke="#a01010" stroke-width="1.2"/>
</svg>
<div class="t" style="left:48px;top:318.00px;font-size:11px;line-height:13px;color:#000;font-weight:400;transform:scaleX(0.975);transform-origin:left center;">1207582303</div>
<div class="t" style="left:163.5px;top:318.00px;font-size:10.5px;line-height:13px;color:#000;font-weight:400;transform:scaleX(0.94);transform-origin:left center;">HUACON GILDA</div>
<div class="t" style="left:248.64125px;top:318.00px;font-size:10.5px;line-height:13px;color:#000;font-weight:400;transform:scaleX(0.89);transform-origin:left center;">( Empleado )</div>
<!--EMP 7 328.5-->
<div class="t" style="left:452.5px;top:318.00px;font-size:10.5px;line-height:13px;color:#000;font-weight:400;transform:scaleX(0.94);transform-origin:left center;">BANCO DEL PICHINCHA</div>
<div class="r" style="left:569.2106249999999px;top:311px;width:149.78937500000006px;height:26px;overflow:hidden">
<div class="t" style="left:0px;top:7.00px;font-size:10.5px;line-height:13px;color:#000;font-weight:400;transform:scaleX(0.895);transform-origin:left center;">[ Cuenta de Ahorros 2202882904 ]</div>
</div>
<div class="t" style="right:542.5px;top:317.00px;font-size:12px;line-height:14px;color:#000;font-weight:700;transform:scaleX(1.02);transform-origin:right center;">750.29</div>
<div class="t" style="left:814px;top:318.50px;font-size:9px;line-height:11px;color:#1212c8;font-weight:700;transform:scaleX(0.885);transform-origin:left center;">REMUNERACION Y FONDO DE RESERVA</div>
<div class="t" style="left:1095px;top:318.50px;font-size:9px;line-height:11px;color:#222;font-weight:400;transform:scaleX(0.82);transform-origin:left center;">40101 - GASTO CORRIENTE – SUELDOS</div>
<div class="r" style="left:17px;top:340px;width:27px;height:23px;border:1px solid #d6d6d6;border-radius:4px;background:#fdfdfd"></div>
<svg class="r" style="left:21px;top:343px" width="18" height="16" viewBox="0 0 18 16" shape-rendering="crispEdges">
<rect x="1" y="4" width="11" height="10" fill="#fdfdf8"/>
<rect x="2" y="5" width="10" height="4" fill="#f0eed0"/>
<rect x="1" y="4" width="11" height="1" fill="#8c8c8c"/><rect x="1" y="4" width="1" height="11" fill="#8c8c8c"/>
<rect x="12" y="6" width="2" height="10" fill="#000"/><rect x="1" y="14" width="13" height="2" fill="#000"/>
<rect x="3" y="10" width="2" height="1" fill="#7070b0"/><rect x="6" y="10" width="5" height="1" fill="#6a7a90"/>
<rect x="3" y="12" width="2" height="1" fill="#0000a0"/><rect x="6" y="12" width="5" height="1" fill="#0000a0"/>
<rect x="8" y="1" width="6" height="5" fill="#dcd8a8"/><rect x="8" y="1" width="6" height="1" fill="#a8a488"/>
<rect x="12" y="6" width="5" height="1" fill="#000"/>
<rect x="14" y="1" width="3" height="5" fill="#3a84dc"/><rect x="14" y="0" width="3" height="1" fill="#1a4a90"/>
<path d="M2 7.5L7 2.5L11.5 7.5" fill="none" stroke="#111" stroke-width="2" stroke-dasharray="1.1 0.7" shape-rendering="auto"/>
</svg>
<div class="r" style="left:132px;top:340px;width:28px;height:23px;border:1px solid #d6d6d6;border-radius:4px;background:#fdfdfd"></div>
<svg class="r" style="left:139px;top:345px" width="14" height="14" viewBox="0 0 14 14">
<path d="M1 1.2L6.5 6.5" stroke="#c01010" stroke-width="2.4" stroke-linecap="round"/>
<path d="M1 1.2L6.5 6.5" stroke="#f05050" stroke-width="0.8" stroke-linecap="round"/>
<path d="M6.5 6.5L12.5 12.8" stroke="#a01010" stroke-width="1.2"/>
<path d="M1.2 11.8L6.5 6.5" stroke="#c01010" stroke-width="2.4" stroke-linecap="round"/>
<path d="M1.2 11.8L6.5 6.5" stroke="#f05050" stroke-width="0.8" stroke-linecap="round"/>
<path d="M6.5 6.5L12.5 0.6" stroke="#a01010" stroke-width="1.2"/>
</svg>
<div class="t" style="left:48px;top:345.00px;font-size:11px;line-height:13px;color:#000;font-weight:400;transform:scaleX(0.975);transform-origin:left center;">1205161068</div>
<div class="t" style="left:163.5px;top:345.00px;font-size:10.5px;line-height:13px;color:#000;font-weight:400;transform:scaleX(0.94);transform-origin:left center;">OLIVO ERIKA</div>
<div class="t" style="left:236.039375px;top:345.00px;font-size:10.5px;line-height:13px;color:#000;font-weight:400;transform:scaleX(0.89);transform-origin:left center;">( Empleado )</div>
<!--EMP 8 355.5-->
<div class="t" style="left:452.5px;top:345.00px;font-size:10.5px;line-height:13px;color:#000;font-weight:400;transform:scaleX(0.94);transform-origin:left center;">BANECUADOR B.P.</div>
<div class="r" style="left:545.27px;top:338px;width:173.73000000000002px;height:26px;overflow:hidden">
<div class="t" style="left:0px;top:7.00px;font-size:10.5px;line-height:13px;color:#000;font-weight:400;transform:scaleX(0.895);transform-origin:left center;">[ Cuenta de Ahorros 900035531 ]</div>
</div>
<div class="t" style="right:542.5px;top:344.00px;font-size:12px;line-height:14px;color:#000;font-weight:700;transform:scaleX(1.02);transform-origin:right center;">750.29</div>
<div class="t" style="left:814px;top:345.50px;font-size:9px;line-height:11px;color:#1212c8;font-weight:700;transform:scaleX(0.885);transform-origin:left center;">REMUNERACION Y FONDO DE RESERVA</div>
<div class="t" style="left:1095px;top:345.50px;font-size:9px;line-height:11px;color:#222;font-weight:400;transform:scaleX(0.82);transform-origin:left center;">40101 - GASTO CORRIENTE – SUELDOS</div>
<div class="r" style="left:17px;top:367px;width:27px;height:23px;border:1px solid #d6d6d6;border-radius:4px;background:#fdfdfd"></div>
<svg class="r" style="left:21px;top:370px" width="18" height="16" viewBox="0 0 18 16" shape-rendering="crispEdges">
<rect x="1" y="4" width="11" height="10" fill="#fdfdf8"/>
<rect x="2" y="5" width="10" height="4" fill="#f0eed0"/>
<rect x="1" y="4" width="11" height="1" fill="#8c8c8c"/><rect x="1" y="4" width="1" height="11" fill="#8c8c8c"/>
<rect x="12" y="6" width="2" height="10" fill="#000"/><rect x="1" y="14" width="13" height="2" fill="#000"/>
<rect x="3" y="10" width="2" height="1" fill="#7070b0"/><rect x="6" y="10" width="5" height="1" fill="#6a7a90"/>
<rect x="3" y="12" width="2" height="1" fill="#0000a0"/><rect x="6" y="12" width="5" height="1" fill="#0000a0"/>
<rect x="8" y="1" width="6" height="5" fill="#dcd8a8"/><rect x="8" y="1" width="6" height="1" fill="#a8a488"/>
<rect x="12" y="6" width="5" height="1" fill="#000"/>
<rect x="14" y="1" width="3" height="5" fill="#3a84dc"/><rect x="14" y="0" width="3" height="1" fill="#1a4a90"/>
<path d="M2 7.5L7 2.5L11.5 7.5" fill="none" stroke="#111" stroke-width="2" stroke-dasharray="1.1 0.7" shape-rendering="auto"/>
</svg>
<div class="r" style="left:132px;top:367px;width:28px;height:23px;border:1px solid #d6d6d6;border-radius:4px;background:#fdfdfd"></div>
<svg class="r" style="left:139px;top:372px" width="14" height="14" viewBox="0 0 14 14">
<path d="M1 1.2L6.5 6.5" stroke="#c01010" stroke-width="2.4" stroke-linecap="round"/>
<path d="M1 1.2L6.5 6.5" stroke="#f05050" stroke-width="0.8" stroke-linecap="round"/>
<path d="M6.5 6.5L12.5 12.8" stroke="#a01010" stroke-width="1.2"/>
<path d="M1.2 11.8L6.5 6.5" stroke="#c01010" stroke-width="2.4" stroke-linecap="round"/>
<path d="M1.2 11.8L6.5 6.5" stroke="#f05050" stroke-width="0.8" stroke-linecap="round"/>
<path d="M6.5 6.5L12.5 0.6" stroke="#a01010" stroke-width="1.2"/>
</svg>
<div class="t" style="left:48px;top:372.00px;font-size:11px;line-height:13px;color:#000;font-weight:400;transform:scaleX(0.975);transform-origin:left center;">0920541166</div>
<div class="t" style="left:163.5px;top:372.00px;font-size:10.5px;line-height:13px;color:#000;font-weight:400;transform:scaleX(0.94);transform-origin:left center;">PINCAY MICHELLY</div>
<div class="t" style="left:260.714375px;top:372.00px;font-size:10.5px;line-height:13px;color:#000;font-weight:400;transform:scaleX(0.89);transform-origin:left center;">( Empleado )</div>
<!--EMP 9 382.5-->
<div class="t" style="left:452.5px;top:372.00px;font-size:10.5px;line-height:13px;color:#000;font-weight:400;transform:scaleX(0.94);transform-origin:left center;">BANCO DEL PACIFICO</div>
<div class="r" style="left:560.809375px;top:365px;width:158.19062499999995px;height:26px;overflow:hidden">
<div class="t" style="left:0px;top:7.00px;font-size:10.5px;line-height:13px;color:#000;font-weight:400;transform:scaleX(0.895);transform-origin:left center;">[ Cuenta de Ahorros 1062270184 ]</div>
</div>
<div class="t" style="right:542.5px;top:371.00px;font-size:12px;line-height:14px;color:#000;font-weight:700;transform:scaleX(1.02);transform-origin:right center;">596.39</div>
<div class="t" style="left:814px;top:372.50px;font-size:9px;line-height:11px;color:#1212c8;font-weight:700;transform:scaleX(0.885);transform-origin:left center;">REMUNERACION Y FONDO DE RESERVA</div>
<div class="t" style="left:1095px;top:372.50px;font-size:9px;line-height:11px;color:#222;font-weight:400;transform:scaleX(0.82);transform-origin:left center;">40101 - GASTO CORRIENTE – SUELDOS</div>
<div class="r" style="left:17px;top:394px;width:27px;height:23px;border:1px solid #d6d6d6;border-radius:4px;background:#fdfdfd"></div>
<svg class="r" style="left:21px;top:397px" width="18" height="16" viewBox="0 0 18 16" shape-rendering="crispEdges">
<rect x="1" y="4" width="11" height="10" fill="#fdfdf8"/>
<rect x="2" y="5" width="10" height="4" fill="#f0eed0"/>
<rect x="1" y="4" width="11" height="1" fill="#8c8c8c"/><rect x="1" y="4" width="1" height="11" fill="#8c8c8c"/>
<rect x="12" y="6" width="2" height="10" fill="#000"/><rect x="1" y="14" width="13" height="2" fill="#000"/>
<rect x="3" y="10" width="2" height="1" fill="#7070b0"/><rect x="6" y="10" width="5" height="1" fill="#6a7a90"/>
<rect x="3" y="12" width="2" height="1" fill="#0000a0"/><rect x="6" y="12" width="5" height="1" fill="#0000a0"/>
<rect x="8" y="1" width="6" height="5" fill="#dcd8a8"/><rect x="8" y="1" width="6" height="1" fill="#a8a488"/>
<rect x="12" y="6" width="5" height="1" fill="#000"/>
<rect x="14" y="1" width="3" height="5" fill="#3a84dc"/><rect x="14" y="0" width="3" height="1" fill="#1a4a90"/>
<path d="M2 7.5L7 2.5L11.5 7.5" fill="none" stroke="#111" stroke-width="2" stroke-dasharray="1.1 0.7" shape-rendering="auto"/>
</svg>
<div class="r" style="left:132px;top:394px;width:28px;height:23px;border:1px solid #d6d6d6;border-radius:4px;background:#fdfdfd"></div>
<svg class="r" style="left:139px;top:399px" width="14" height="14" viewBox="0 0 14 14">
<path d="M1 1.2L6.5 6.5" stroke="#c01010" stroke-width="2.4" stroke-linecap="round"/>
<path d="M1 1.2L6.5 6.5" stroke="#f05050" stroke-width="0.8" stroke-linecap="round"/>
<path d="M6.5 6.5L12.5 12.8" stroke="#a01010" stroke-width="1.2"/>
<path d="M1.2 11.8L6.5 6.5" stroke="#c01010" stroke-width="2.4" stroke-linecap="round"/>
<path d="M1.2 11.8L6.5 6.5" stroke="#f05050" stroke-width="0.8" stroke-linecap="round"/>
<path d="M6.5 6.5L12.5 0.6" stroke="#a01010" stroke-width="1.2"/>
</svg>
<div class="t" style="left:48px;top:399.00px;font-size:11px;line-height:13px;color:#000;font-weight:400;transform:scaleX(0.975);transform-origin:left center;">1207708478</div>
<div class="t" style="left:163.5px;top:399.00px;font-size:10.5px;line-height:13px;color:#000;font-weight:400;transform:scaleX(0.94);transform-origin:left center;">SANTILLAN ESPINOZA JOHANNA PAO</div>
<div class="t" style="left:351.5859375px;top:399.00px;font-size:10.5px;line-height:13px;color:#000;font-weight:400;transform:scaleX(0.89);transform-origin:left center;">( Empleado )</div>
<!--EMP 10 409.5-->
<div class="t" style="left:452.5px;top:399.00px;font-size:10.5px;line-height:13px;color:#000;font-weight:400;transform:scaleX(0.94);transform-origin:left center;">BANCO DEL PICHINCHA</div>
<div class="r" style="left:569.2106249999999px;top:392px;width:149.78937500000006px;height:26px;overflow:hidden">
<div class="t" style="left:0px;top:7.00px;font-size:10.5px;line-height:13px;color:#000;font-weight:400;transform:scaleX(0.895);transform-origin:left center;">[ Cuenta de Ahorros 2202180772 ]</div>
</div>
<div class="t" style="right:542.5px;top:398.00px;font-size:12px;line-height:14px;color:#000;font-weight:700;transform:scaleX(1.02);transform-origin:right center;">649.29</div>
<div class="t" style="left:814px;top:399.50px;font-size:9px;line-height:11px;color:#1212c8;font-weight:700;transform:scaleX(0.885);transform-origin:left center;">REMUNERACION Y FONDO DE RESERVA</div>
<div class="t" style="left:1095px;top:399.50px;font-size:9px;line-height:11px;color:#222;font-weight:400;transform:scaleX(0.82);transform-origin:left center;">40101 - GASTO CORRIENTE – SUELDOS</div>
<div class="r" style="left:14px;top:646px;width:456px;height:57px;border:1px solid #a0a0a0;background:#f9f9fd"></div>
<div class="r" style="left:452px;top:648px;width:16px;height:53px;background:#eeeeee"></div>
<div class="t" style="left:18.5px;top:650.50px;font-size:11px;line-height:13px;color:#111;font-weight:400;transform:scaleX(0.91);transform-origin:left center;">REMUNERACION Y FONDO DE RESERVA DEL MES DE ENERO</div>
<svg class="r" style="left:482px;top:647px" width="18" height="18" viewBox="0 0 18 18"><circle cx="9" cy="9" r="8" fill="#f2c012"/>
<path d="M6.5 8v-2a2.5 2.5 0 0 1 5 0v2" fill="none" stroke="#333" stroke-width="1.3"/><rect x="5.5" y="8" width="7" height="5.5" fill="#333"/><rect x="8.3" y="9.5" width="1.4" height="2.5" fill="#c8a020"/></svg>
<div class="r" style="left:482px;top:677px;width:21px;height:21px;border:1px solid #f0f0f0;border-radius:4px;background:#fff"></div>
<div class="r" style="left:484px;top:679px;width:16px;height:16px;background:#a0a0a0"></div>
<div class="t" style="left:519px;top:643.50px;font-size:20px;line-height:24px;color:#0a0a80;font-weight:400;transform:scaleX(1.015);transform-origin:left center;">Total Beneficiarios</div>
<div class="t" style="left:706.5px;top:643.50px;font-size:20px;line-height:24px;color:#0a0a80;font-weight:400;transform:scaleX(0.99);transform-origin:left center;">Total del SPi</div>
<div class="t" style="left:826.5px;top:643.50px;font-size:20px;line-height:24px;color:#0a0a80;font-weight:400;transform:scaleX(0.972);transform-origin:left center;">No. Referencia</div>
<div class="t" style="right:259px;top:643.50px;font-size:20px;line-height:24px;color:#0a0a80;font-weight:400;transform:scaleX(0.9);transform-origin:right center;">Fecha</div>
<div class="r" style="left:555px;top:667px;width:131px;height:33px;border:1px solid #a8a8a8;background:#ffffe1"></div>
<div class="r" style="left:690px;top:667px;width:131px;height:33px;border:1px solid #a8a8a8;background:#ffffe1"></div>
<div class="r" style="left:828px;top:667px;width:131px;height:33px;border:1px solid #a8b8d0;background:#ececec"></div>
<div class="r" style="left:964px;top:667px;width:131px;height:33px;border:1px solid #a8a8a8;background:#fff"></div>
<div class="t" style="right:672.5px;top:672.00px;font-size:20px;line-height:24px;color:#dd0000;font-weight:400;transform:scaleX(0.95);transform-origin:right center;">11</div>
<div class="t" style="right:536.5px;top:672.00px;font-size:20px;line-height:24px;color:#dd0000;font-weight:400;transform:scaleX(0.98);transform-origin:right center;">7,515.60</div>
<div class="t" style="left:834.5px;top:672.00px;font-size:20px;line-height:24px;color:#6d6d6d;font-weight:400;transform:scaleX(0.99);transform-origin:left center;">0000000005</div>
<div class="t" style="left:976.5px;top:671.50px;font-size:20px;line-height:24px;color:#000;font-weight:400;transform:scaleX(1.025);transform-origin:left center;">31/01/2025</div>
<div class="r" style="left:1101px;top:662px;width:158px;height:38px;border:1px solid #cfcfcf;border-radius:4px;background:#fdfdfd"></div>
<svg class="r" style="left:1105px;top:662px" width="38" height="38" viewBox="0 0 38 38">
<defs><pattern id="dz2" width="2" height="2" patternUnits="userSpaceOnUse"><rect width="2" height="2" fill="#f4f488"/><rect width="1" height="1" fill="#d0d08a"/><rect x="1" y="1" width="1" height="1" fill="#d0d08a"/></pattern></defs>
<path d="M20.5 5L21.5 3.5H26L27 5" fill="#f4f4d0" stroke="#777" stroke-width="0.9"/>
<rect x="20" y="5" width="12" height="5" fill="#f4f4cc" stroke="#888" stroke-width="0.9"/>
<path d="M19.5 9.5H31L33 15H21.5Z" fill="url(#dz2)" stroke="#666" stroke-width="0.9"/>
<path d="M31.5 5.5L33.5 6.5V15.8H22.5" fill="none" stroke="#000" stroke-width="1.6"/>
<path d="M7.5 18.5C8 14 10 11 13 10.2L16.5 10.5L19.5 12.5L14 21L13.5 22Z" fill="#fff" stroke="#666" stroke-width="0.9"/>
<path d="M19.5 12.5L14 21M7.5 18.5L13.5 22" fill="none" stroke="#000" stroke-width="1.3"/>
<path d="M13.5 22L18 17L20.5 18L15.5 26Z" fill="#fff"/>
<path d="M18 17L20.5 18L15.5 26M9 24L15.5 26.5" fill="none" stroke="#000" stroke-width="1.2"/>
<path d="M15.5 26.5L18 21.5L21.5 22.5L16.5 30Z" fill="#fff"/>
<path d="M18 21.5L21.5 22.5L16.5 30.5" fill="none" stroke="#000" stroke-width="1.2"/>
<path d="M4.5 23.5L6 22H9.5L10.5 23.5" fill="#f4f4d0" stroke="#777" stroke-width="0.9"/>
<rect x="4" y="23.5" width="11" height="5" fill="#f4f4cc" stroke="#888" stroke-width="0.9"/>
<path d="M3.5 28H15L17.3 33.5H5.5Z" fill="url(#dz2)" stroke="#666" stroke-width="0.9"/>
<path d="M16.8 26.5L18.3 34.3H6" fill="none" stroke="#000" stroke-width="1.6"/>
<path d="M22 27.5Q26.5 27.5 27.6 22.5" fill="none" stroke="#e01818" stroke-width="1.3" stroke-dasharray="1.6 0.9"/>
<path d="M28 19.5L30.6 22.6H25.4Z" fill="#e01818"/>
</svg>
<div class="t" style="left:1201px;top:668.50px;font-size:11px;line-height:13px;color:#d8101c;font-weight:700;transform:translateX(-50%) scaleX(0.945);"><u>C</u>arga Masiva desde</div>
<div class="t" style="left:1201px;top:679.50px;font-size:11px;line-height:13px;color:#d8101c;font-weight:700;transform:translateX(-50%) scaleX(0.955);">archivo TXT</div>
</body></html>
